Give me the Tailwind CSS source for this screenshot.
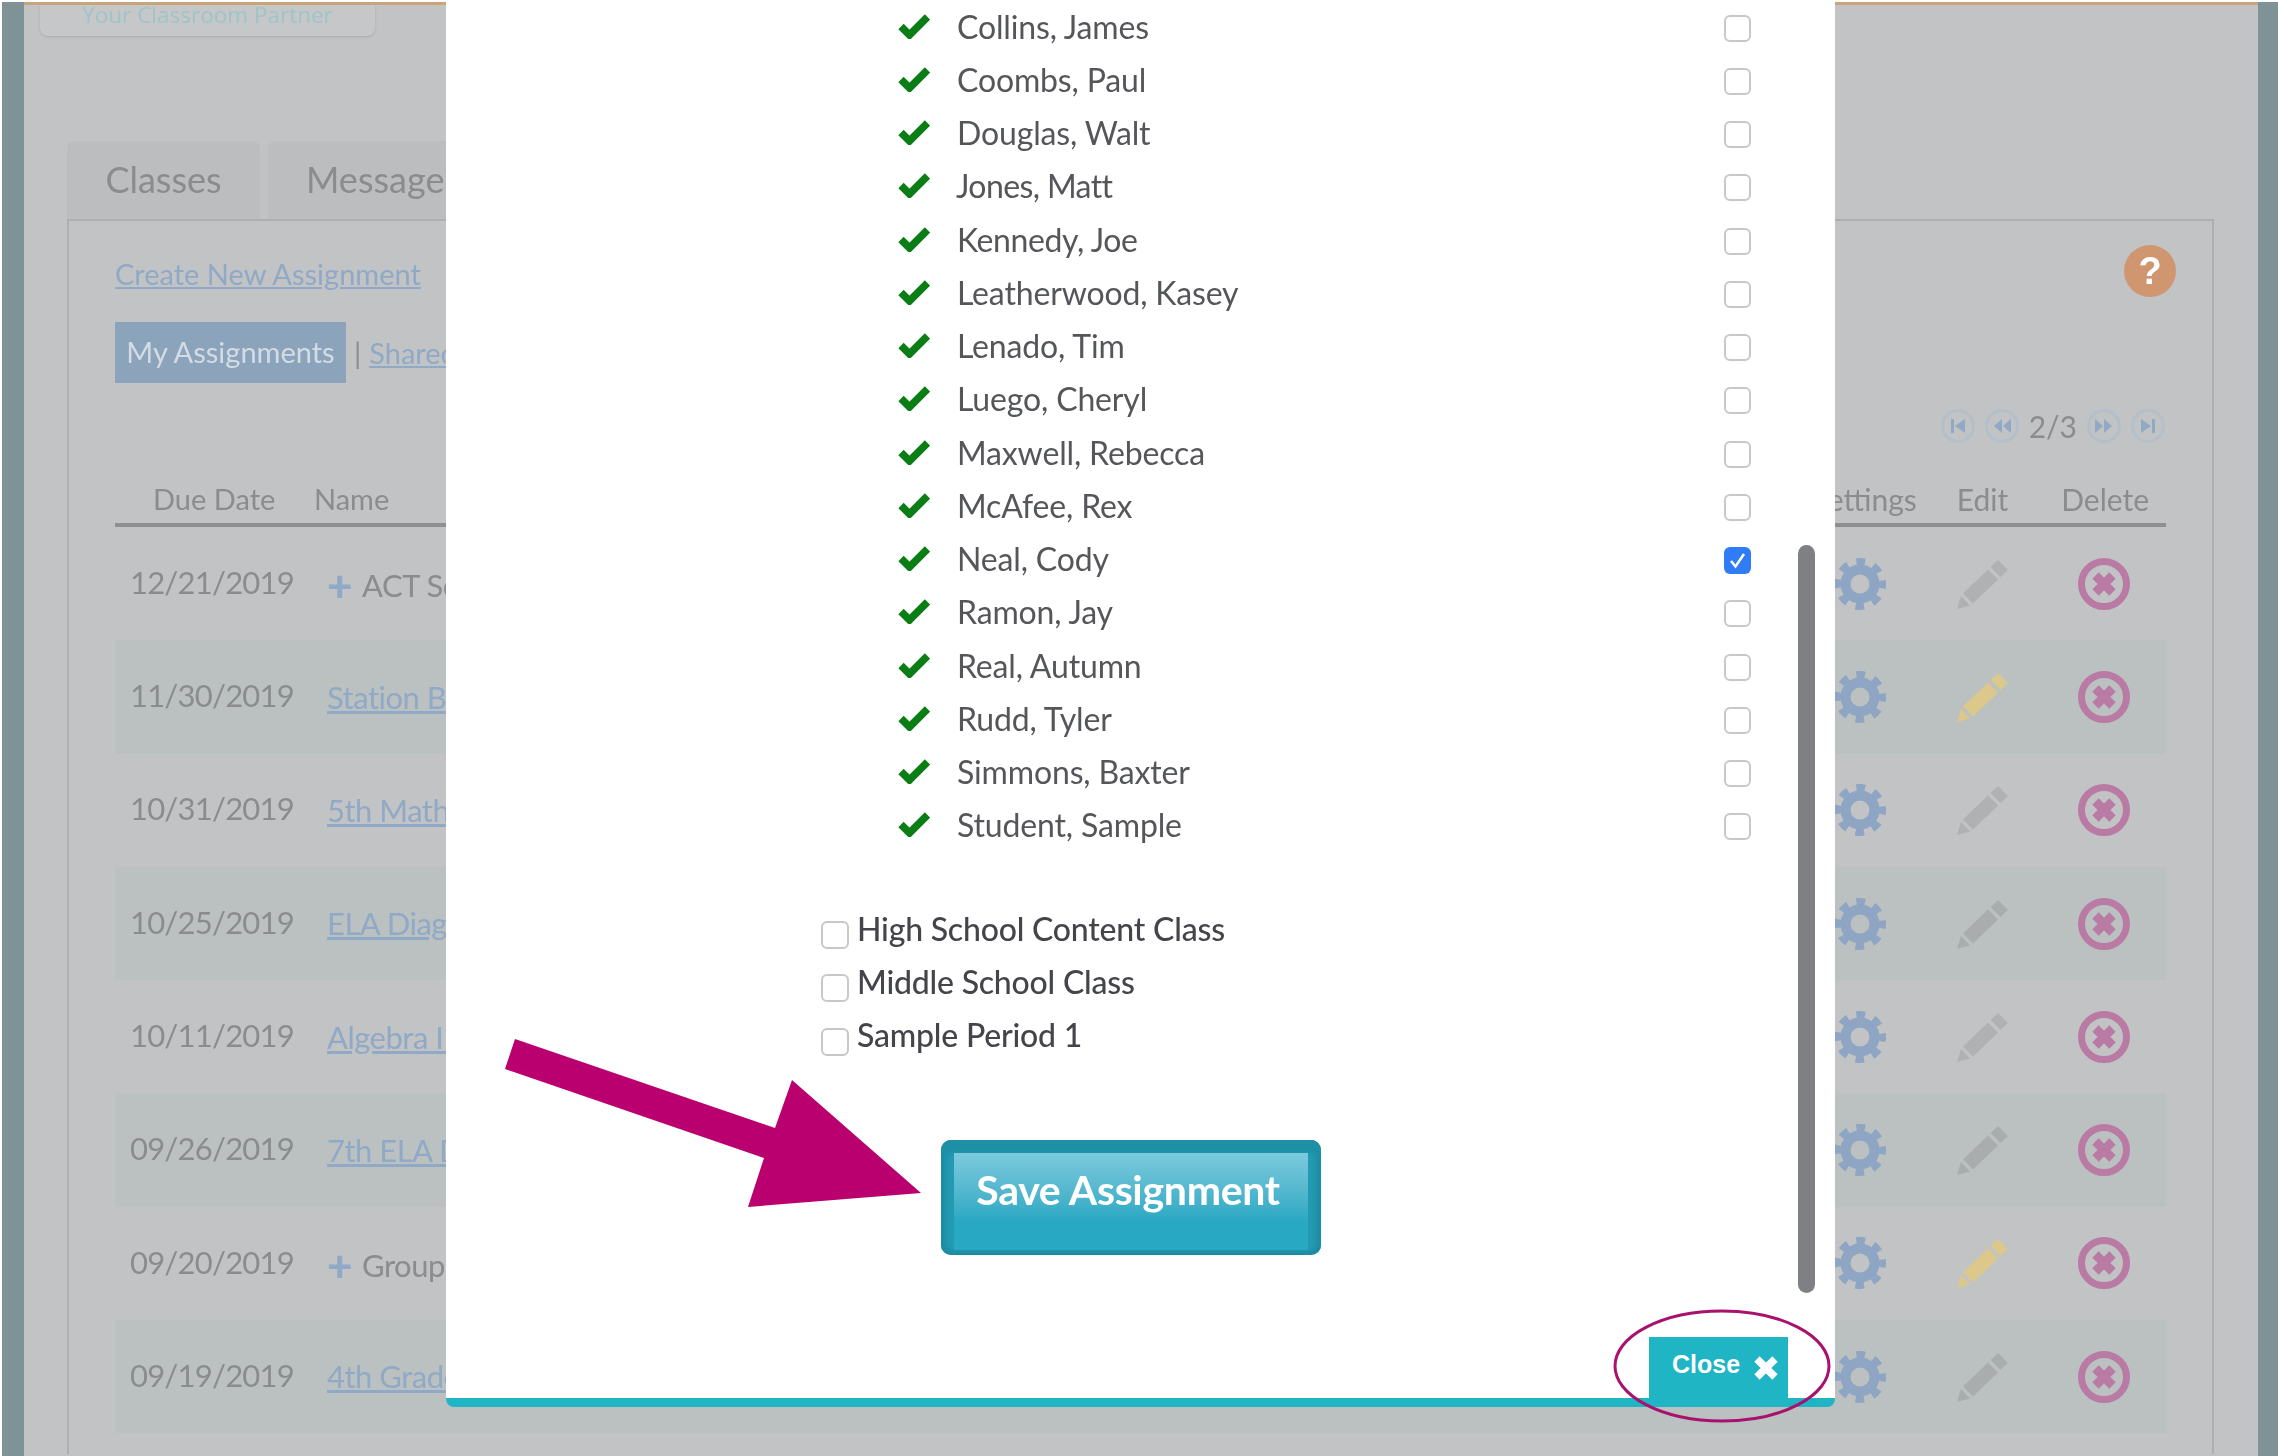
<!DOCTYPE html>
<html>
  <head>
    <meta name="viewport" content="width=device-width, initial-scale=1">
    <script src="https://cdn.jsdelivr.net/npm/@tailwindcss/browser@4"></script>
  </head>
  <body class="bg-white font-['Lato','Noto_Sans',sans-serif]">
    <svg class="hidden">
      <symbol id="gear" viewBox="0 0 52 52">
        <circle cx="26" cy="26" r="14.500" fill="none" stroke="currentColor" stroke-width="10"/>
        <circle cx="26" cy="26" r="22" fill="none" stroke="currentColor" stroke-width="8" stroke-dasharray="8.600 8.680" stroke-dashoffset="4.300"/>
      </symbol>
      <symbol id="pencil" viewBox="0 0 52 52">
        <path fill="currentColor" d="M1 51l4-13 9 9.500zM7 35.500l25-24 10 10-25 24zM34.600 9l7.500-7 9.800 10-7.500 7z"/>
      </symbol>
      <symbol id="del" viewBox="0 0 52 52">
        <circle cx="26" cy="26" r="22.500" fill="none" stroke="currentColor" stroke-width="7"/>
        <path fill="none" stroke="currentColor" stroke-width="9" d="M17.500 17.500l17 17M34.500 17.500l-17 17"/>
      </symbol>
      <symbol id="check" viewBox="0 0 32 26">
        <path fill="none" stroke="currentColor" stroke-width="7.500" d="M3 13.500l8.500 8.500 18-18"/>
      </symbol>
      <symbol id="pg" viewBox="0 0 34 34">
        <circle cx="17" cy="17" r="15.500" fill="none" stroke="#b3bfc9" stroke-width="3"/>
      </symbol>
    </svg>

    <div id="page" class="relative w-[2278px] h-[1456px] overflow-hidden pt-[2px] pl-[2px] blur-[0.7px]">
      <div class="flex h-full">
        <div class="w-[22px] bg-[#7f9296]"></div>

        <div id="main" class="flex-1 min-w-0 bg-[#c2c3c4] border-t-[3px] border-[#c9a57a] text-[#8b8c8e]">
          <div class="ml-[16px] w-[335px] h-[31px] bg-[#c6c7c8] rounded-b-lg shadow-sm flex items-center justify-center pb-[12px] text-[22.500px] text-[#9fc4c8] font-['Open_Sans',sans-serif]">Your Classroom Partner</div>

          <div class="pl-[43px] pr-[44px] mt-[105px]">
            <div class="flex gap-[8px] h-[78px]">
              <div class="w-[193px] bg-[#bcbdbe] rounded-t-lg flex items-center justify-center pb-[2px] text-[36px]">Classes</div>
              <div class="w-[400px] bg-[#bcbdbe] rounded-t-lg flex items-center pl-[38px] pb-[2px] text-[36px]">Messages</div>
            </div>

            <div id="panel" class="relative border-2 border-[#aeafb0] border-b-0 h-[1235px] pl-[46px] pr-[46px]">
              <div class="absolute right-[36px] top-[24px] w-[52px] h-[52px] rounded-full bg-[#cf9670] flex items-center justify-center text-white font-['Liberation_Sans',sans-serif] font-bold text-[38px]">?</div>
              <a class="block pt-[33px] h-[101px] text-[29px] leading-[40px] text-[#8fa9c6] underline">Create New Assignment</a>
              <div class="flex items-center h-[61px] text-[29px]">
                <span class="w-[231px] h-full bg-[#8ca4bb] text-[#d3dce4] flex items-center justify-center pb-[2px]">My Assignments</span>
                <span class="ml-[8px]">|</span>
                <a class="ml-[8px] text-[#8fa9c6] underline">Shared Assignments</a>
              </div>

              <div class="flex justify-end items-center h-[42px] mt-[22px] pr-[1px] gap-[10px] text-[30px]">
                <svg class="w-[34px] h-[34px]"><use href="#pg"/><path fill="#8fa9c6" d="M10 10h3v14h-3zM24 10v14l-10-7z"/></svg>
                <svg class="w-[34px] h-[34px]"><use href="#pg"/><path fill="#8fa9c6" d="M17 10v14l-8-7zM26 10v14l-8-7z"/></svg>
                <span>2/3</span>
                <svg class="w-[34px] h-[34px]"><use href="#pg"/><path fill="#8fa9c6" d="M8 10v14l8-7zM17 10v14l8-7z"/></svg>
                <svg class="w-[34px] h-[34px]"><use href="#pg"/><path fill="#8fa9c6" d="M10 10v14l10-7zM21 10h3v14h-3z"/></svg>
              </div>

              <div class="flex items-center h-[52px] mt-[28px] border-b-4 border-[#8e8f91] text-[30px]">
                <span class="w-[199px] pl-[38px] text-[29px]">Due Date</span>
                <span class="flex-1 text-[29px]">Name</span>
                <span>Settings</span>
                <span class="ml-[40px]">Edit</span>
                <span class="ml-[53px] mr-[17px]">Delete</span>
              </div>

              <div class="flex items-center h-[113.300px]">
                <span class="w-[212px] pl-[15px] pb-[3px] text-[31px] tracking-[-0.800px]">12/21/2019</span>
                <span class="flex-1 flex items-center pt-[3px] text-[31px] tracking-[-0.500px]"><span class="text-[#8fa9c6] font-black text-[44px] leading-none mr-[10px]">+</span>ACT Science</span>
                <div class="flex gap-[70px] pr-[36px]">
                  <svg class="w-[52px] h-[52px] text-[#8ea5c4]"><use href="#gear"/></svg>
                  <svg class="w-[52px] h-[52px] text-[#b0b1b2]"><use href="#pencil"/></svg>
                  <svg class="w-[52px] h-[52px] text-[#b97aa3]"><use href="#del"/></svg>
                </div>
              </div>
              <div class="flex items-center h-[113.300px] bg-[#bbc1c1]">
                <span class="w-[212px] pl-[15px] pb-[3px] text-[31px] tracking-[-0.800px]">11/30/2019</span>
                <a class="flex-1 text-[31px] tracking-[-0.500px] text-[#8fa9c6] underline">Station Badges</a>
                <div class="flex gap-[70px] pr-[36px]">
                  <svg class="w-[52px] h-[52px] text-[#8ea5c4]"><use href="#gear"/></svg>
                  <svg class="w-[52px] h-[52px] text-[#dcc88a]"><use href="#pencil"/></svg>
                  <svg class="w-[52px] h-[52px] text-[#b97aa3]"><use href="#del"/></svg>
                </div>
              </div>
              <div class="flex items-center h-[113.300px]">
                <span class="w-[212px] pl-[15px] pb-[3px] text-[31px] tracking-[-0.800px]">10/31/2019</span>
                <a class="flex-1 text-[31px] tracking-[-0.500px] text-[#8fa9c6] underline">5th Math Review</a>
                <div class="flex gap-[70px] pr-[36px]">
                  <svg class="w-[52px] h-[52px] text-[#8ea5c4]"><use href="#gear"/></svg>
                  <svg class="w-[52px] h-[52px] text-[#b0b1b2]"><use href="#pencil"/></svg>
                  <svg class="w-[52px] h-[52px] text-[#b97aa3]"><use href="#del"/></svg>
                </div>
              </div>
              <div class="flex items-center h-[113.300px] bg-[#bbc1c1]">
                <span class="w-[212px] pl-[15px] pb-[3px] text-[31px] tracking-[-0.800px]">10/25/2019</span>
                <a class="flex-1 text-[31px] tracking-[-0.500px] text-[#8fa9c6] underline">ELA Diagnostic</a>
                <div class="flex gap-[70px] pr-[36px]">
                  <svg class="w-[52px] h-[52px] text-[#8ea5c4]"><use href="#gear"/></svg>
                  <svg class="w-[52px] h-[52px] text-[#a9adad]"><use href="#pencil"/></svg>
                  <svg class="w-[52px] h-[52px] text-[#b97aa3]"><use href="#del"/></svg>
                </div>
              </div>
              <div class="flex items-center h-[113.300px]">
                <span class="w-[212px] pl-[15px] pb-[3px] text-[31px] tracking-[-0.800px]">10/11/2019</span>
                <a class="flex-1 text-[31px] tracking-[-0.500px] text-[#8fa9c6] underline">Algebra I Test</a>
                <div class="flex gap-[70px] pr-[36px]">
                  <svg class="w-[52px] h-[52px] text-[#8ea5c4]"><use href="#gear"/></svg>
                  <svg class="w-[52px] h-[52px] text-[#b0b1b2]"><use href="#pencil"/></svg>
                  <svg class="w-[52px] h-[52px] text-[#b97aa3]"><use href="#del"/></svg>
                </div>
              </div>
              <div class="flex items-center h-[113.300px] bg-[#bbc1c1]">
                <span class="w-[212px] pl-[15px] pb-[3px] text-[31px] tracking-[-0.800px]">09/26/2019</span>
                <a class="flex-1 text-[31px] tracking-[-0.500px] text-[#8fa9c6] underline">7th ELA Diagnostic</a>
                <div class="flex gap-[70px] pr-[36px]">
                  <svg class="w-[52px] h-[52px] text-[#8ea5c4]"><use href="#gear"/></svg>
                  <svg class="w-[52px] h-[52px] text-[#a9adad]"><use href="#pencil"/></svg>
                  <svg class="w-[52px] h-[52px] text-[#b97aa3]"><use href="#del"/></svg>
                </div>
              </div>
              <div class="flex items-center h-[113.300px]">
                <span class="w-[212px] pl-[15px] pb-[3px] text-[31px] tracking-[-0.800px]">09/20/2019</span>
                <span class="flex-1 flex items-center pt-[3px] text-[31px] tracking-[-0.500px]"><span class="text-[#8fa9c6] font-black text-[44px] leading-none mr-[10px]">+</span>Group Assignment</span>
                <div class="flex gap-[70px] pr-[36px]">
                  <svg class="w-[52px] h-[52px] text-[#8ea5c4]"><use href="#gear"/></svg>
                  <svg class="w-[52px] h-[52px] text-[#dcc88a]"><use href="#pencil"/></svg>
                  <svg class="w-[52px] h-[52px] text-[#b97aa3]"><use href="#del"/></svg>
                </div>
              </div>
              <div class="flex items-center h-[113.300px] bg-[#bbc1c1]">
                <span class="w-[212px] pl-[15px] pb-[3px] text-[31px] tracking-[-0.800px]">09/19/2019</span>
                <a class="w-[523px] text-[31px] tracking-[-0.500px] text-[#8fa9c6] underline">4th Grade Math Test</a>
                <span class="flex-1 pt-[42px] text-[26px]">4th Grade Math</span>
                <div class="flex gap-[70px] pr-[36px]">
                  <svg class="w-[52px] h-[52px] text-[#8ea5c4]"><use href="#gear"/></svg>
                  <svg class="w-[52px] h-[52px] text-[#a9adad]"><use href="#pencil"/></svg>
                  <svg class="w-[52px] h-[52px] text-[#b97aa3]"><use href="#del"/></svg>
                </div>
              </div>
            </div>
          </div>
        </div>

        <div class="w-[20px] bg-[#7f9296]"></div>
      </div>

      <!-- modal over the dimmed page -->
      <div id="modal" class="absolute left-[446px] top-0 w-[1389px] h-[1407px] bg-white border-b-[9px] border-[#1fb5c5] rounded-b-lg text-[#55565a] text-[32px] tracking-[-0.150px]">
        <div class="pl-[452px] w-[1305px]">
          <div class="flex items-center h-[53.250px]"><svg class="w-[32px] h-[26px] mb-[2px] text-[#0a7d14] mr-[27px]"><use href="#check"/></svg><span class="flex-1">Collins, James</span><input type="checkbox" class="appearance-none w-[27px] h-[27px] mt-[3px] border-2 border-[#c8c8c8] rounded-md"></div>
          <div class="flex items-center h-[53.250px]"><svg class="w-[32px] h-[26px] mb-[2px] text-[#0a7d14] mr-[27px]"><use href="#check"/></svg><span class="flex-1">Coombs, Paul</span><input type="checkbox" class="appearance-none w-[27px] h-[27px] mt-[3px] border-2 border-[#c8c8c8] rounded-md"></div>
          <div class="flex items-center h-[53.250px]"><svg class="w-[32px] h-[26px] mb-[2px] text-[#0a7d14] mr-[27px]"><use href="#check"/></svg><span class="flex-1">Douglas, Walt</span><input type="checkbox" class="appearance-none w-[27px] h-[27px] mt-[3px] border-2 border-[#c8c8c8] rounded-md"></div>
          <div class="flex items-center h-[53.250px]"><svg class="w-[32px] h-[26px] mb-[2px] text-[#0a7d14] mr-[26px]"><use href="#check"/></svg><span class="flex-1 tracking-[-0.600px]">Jones, Matt</span><input type="checkbox" class="appearance-none w-[27px] h-[27px] mt-[3px] border-2 border-[#c8c8c8] rounded-md"></div>
          <div class="flex items-center h-[53.250px]"><svg class="w-[32px] h-[26px] mb-[2px] text-[#0a7d14] mr-[27px]"><use href="#check"/></svg><span class="flex-1 tracking-[-0.400px]">Kennedy, Joe</span><input type="checkbox" class="appearance-none w-[27px] h-[27px] mt-[3px] border-2 border-[#c8c8c8] rounded-md"></div>
          <div class="flex items-center h-[53.250px]"><svg class="w-[32px] h-[26px] mb-[2px] text-[#0a7d14] mr-[27px]"><use href="#check"/></svg><span class="flex-1">Leatherwood, Kasey</span><input type="checkbox" class="appearance-none w-[27px] h-[27px] mt-[3px] border-2 border-[#c8c8c8] rounded-md"></div>
          <div class="flex items-center h-[53.250px]"><svg class="w-[32px] h-[26px] mb-[2px] text-[#0a7d14] mr-[27px]"><use href="#check"/></svg><span class="flex-1">Lenado, Tim</span><input type="checkbox" class="appearance-none w-[27px] h-[27px] mt-[3px] border-2 border-[#c8c8c8] rounded-md"></div>
          <div class="flex items-center h-[53.250px]"><svg class="w-[32px] h-[26px] mb-[2px] text-[#0a7d14] mr-[27px]"><use href="#check"/></svg><span class="flex-1">Luego, Cheryl</span><input type="checkbox" class="appearance-none w-[27px] h-[27px] mt-[3px] border-2 border-[#c8c8c8] rounded-md"></div>
          <div class="flex items-center h-[53.250px]"><svg class="w-[32px] h-[26px] mb-[2px] text-[#0a7d14] mr-[27px]"><use href="#check"/></svg><span class="flex-1">Maxwell, Rebecca</span><input type="checkbox" class="appearance-none w-[27px] h-[27px] mt-[3px] border-2 border-[#c8c8c8] rounded-md"></div>
          <div class="flex items-center h-[53.250px]"><svg class="w-[32px] h-[26px] mb-[2px] text-[#0a7d14] mr-[27px]"><use href="#check"/></svg><span class="flex-1">McAfee, Rex</span><input type="checkbox" class="appearance-none w-[27px] h-[27px] mt-[3px] border-2 border-[#c8c8c8] rounded-md"></div>
          <div class="flex items-center h-[53.250px]"><svg class="w-[32px] h-[26px] mb-[2px] text-[#0a7d14] mr-[27px]"><use href="#check"/></svg><span class="flex-1">Neal, Cody</span>
            <div class="w-[27px] h-[27px] mt-[3px] bg-[#2f7cf6] rounded-md flex items-center justify-center"><svg class="w-[19px] h-[19px]" viewBox="0 0 19 19"><path fill="none" stroke="#fff" stroke-width="2.500" d="M3 10l4.500 5.500L16 3"/></svg></div>
          </div>
          <div class="flex items-center h-[53.250px]"><svg class="w-[32px] h-[26px] mb-[2px] text-[#0a7d14] mr-[27px]"><use href="#check"/></svg><span class="flex-1">Ramon, Jay</span><input type="checkbox" class="appearance-none w-[27px] h-[27px] mt-[3px] border-2 border-[#c8c8c8] rounded-md"></div>
          <div class="flex items-center h-[53.250px]"><svg class="w-[32px] h-[26px] mb-[2px] text-[#0a7d14] mr-[27px]"><use href="#check"/></svg><span class="flex-1">Real, Autumn</span><input type="checkbox" class="appearance-none w-[27px] h-[27px] mt-[3px] border-2 border-[#c8c8c8] rounded-md"></div>
          <div class="flex items-center h-[53.250px]"><svg class="w-[32px] h-[26px] mb-[2px] text-[#0a7d14] mr-[27px]"><use href="#check"/></svg><span class="flex-1">Rudd, Tyler</span><input type="checkbox" class="appearance-none w-[27px] h-[27px] mt-[3px] border-2 border-[#c8c8c8] rounded-md"></div>
          <div class="flex items-center h-[53.250px]"><svg class="w-[32px] h-[26px] mb-[2px] text-[#0a7d14] mr-[27px]"><use href="#check"/></svg><span class="flex-1">Simmons, Baxter</span><input type="checkbox" class="appearance-none w-[27px] h-[27px] mt-[3px] border-2 border-[#c8c8c8] rounded-md"></div>
          <div class="flex items-center h-[53.250px]"><svg class="w-[32px] h-[26px] mb-[2px] text-[#0a7d14] mr-[27px]"><use href="#check"/></svg><span class="flex-1">Student, Sample</span><input type="checkbox" class="appearance-none w-[27px] h-[27px] mt-[3px] border-2 border-[#c8c8c8] rounded-md"></div>
        </div>

        <div class="pl-[375px] mt-[50px] font-medium text-[#44454a] tracking-[-0.200px]">
          <div class="flex items-center h-[53.250px]"><input type="checkbox" class="appearance-none w-[28px] h-[28px] mt-[13px] mr-[8px] border-2 border-[#c8c8c8] rounded-md">High School Content Class</div>
          <div class="flex items-center h-[53.250px]"><input type="checkbox" class="appearance-none w-[28px] h-[28px] mt-[13px] mr-[8px] border-2 border-[#c8c8c8] rounded-md">Middle School Class</div>
          <div class="flex items-center h-[53.250px]"><input type="checkbox" class="appearance-none w-[28px] h-[28px] mt-[13px] mr-[8px] border-2 border-[#c8c8c8] rounded-md">Sample Period 1</div>
        </div>

        <button class="block ml-[495px] mt-[78px] w-[380px] h-[115px] rounded-[10px] pt-[13px] px-[13px] pb-[5px] bg-[#2499b2] shadow-[inset_0_13px_4px_#1e90a5,inset_0_0_7px_2px_#17839a]">
          <span class="flex h-full items-start justify-center pt-[6px] pr-[6px] bg-gradient-to-b from-[#7bcadd] to-[#28a8c3] to-[70%] text-white font-bold text-[41px] tracking-[-0.300px]">Save Assignment</span>
        </button>

        <div class="absolute left-[1352px] top-[545px] w-[17px] h-[748px] rounded-full bg-[#7f8083]"></div>
        <div class="absolute right-[47px] -bottom-[9px] w-[139px] h-[70px] bg-[#1fb5c5] flex items-center pl-[23px] pb-[14px] text-white font-['Liberation_Sans',sans-serif] font-bold text-[25px] tracking-normal">
          Close
          <svg class="w-[24px] h-[24px] ml-[14px] mt-[6px]" viewBox="0 0 24 24"><path fill="none" stroke="#fff" stroke-width="7.500" d="M3 3l18 18M21 3L3 21"/></svg>
        </div>
      </div>

      <!-- annotation marks -->
      <svg class="absolute inset-0 w-[2278px] h-[1456px] pointer-events-none" viewBox="0 0 2278 1456">
        <polygon fill="#b9006e" points="515,1039 505,1069 764,1158 748,1207 921,1193 792,1080 775,1128"/>
        <ellipse cx="1722" cy="1366" rx="107" ry="55" fill="none" stroke="#a8116e" stroke-width="3"/>
      </svg>
    </div>
  </body>
</html>
